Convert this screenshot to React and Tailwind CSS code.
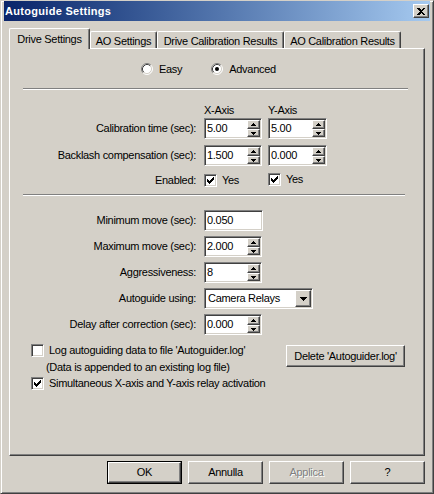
import React from "react";

const raised =
  "border border-t-white border-l-white border-r-[#404040] border-b-[#404040] shadow-[inset_-1px_-1px_0_#808080]";
const sunken =
  "border border-t-[#808080] border-l-[#808080] border-r-white border-b-white shadow-[inset_1px_1px_0_#404040,inset_-1px_-1px_0_#d4d0c8]";

function Check({ checked }) {
  return (
    <div className={`w-[13px] h-[13px] bg-white p-px ${sunken} shrink-0`}>
      {checked && (
        <svg width="9" height="9" viewBox="0 0 9 9" shapeRendering="crispEdges" className="block">
          <rect x="1" y="3" width="1" height="3" fill="#000" />
          <rect x="2" y="4" width="1" height="3" fill="#000" />
          <rect x="3" y="5" width="1" height="3" fill="#000" />
          <rect x="4" y="4" width="1" height="3" fill="#000" />
          <rect x="5" y="3" width="1" height="3" fill="#000" />
          <rect x="6" y="2" width="1" height="3" fill="#000" />
          <rect x="7" y="1" width="1" height="3" fill="#000" />
        </svg>
      )}
    </div>
  );
}

function Radio({ checked }) {
  return (
    <svg width="12" height="12" viewBox="0 0 12 12" className="shrink-0">
      <circle cx="6" cy="6" r="5" fill="#fff" />
      <path d="M2.11 9.89 A5.5 5.5 0 0 1 9.89 2.11" fill="none" stroke="#808080" />
      <path d="M2.82 9.18 A4.5 4.5 0 0 1 9.18 2.82" fill="none" stroke="#404040" />
      <path d="M9.89 2.11 A5.5 5.5 0 0 1 2.11 9.89" fill="none" stroke="#fff" />
      <path d="M9.18 2.82 A4.5 4.5 0 0 1 2.82 9.18" fill="none" stroke="#d4d0c8" />
      {checked && <circle cx="6" cy="6" r="2" fill="#000" />}
    </svg>
  );
}

function Spin({ value, width = "w-[58px]" }) {
  return (
    <div className={`${width} h-[21px] p-px bg-white flex ${sunken}`}>
      <div className="flex-1 pl-px leading-[17px]">{value}</div>
      <div className="w-[13px] flex flex-col">
        <div className={`h-[9px] bg-[#d4d0c8] flex items-center justify-center ${raised}`}>
          <svg width="5" height="3" viewBox="0 0 5 3" shapeRendering="crispEdges">
            <polygon points="2.5,0 5,3 0,3" fill="#000" />
          </svg>
        </div>
        <div className={`h-[8px] bg-[#d4d0c8] flex items-center justify-center ${raised}`}>
          <svg width="5" height="3" viewBox="0 0 5 3" shapeRendering="crispEdges">
            <polygon points="0,0 5,0 2.5,3" fill="#000" />
          </svg>
        </div>
      </div>
    </div>
  );
}

function Row({ label, children, className = "" }) {
  return (
    <div className={`flex items-center h-[21px] ${className}`}>
      <div className="w-[186px] text-right">{label}</div>
      <div className="ml-[8px] flex gap-[6px]">{children}</div>
    </div>
  );
}

function Button({ children, primary, disabled, className = "" }) {
  const inner = (
    <div
      className={`h-full w-full flex items-center justify-center bg-[#d4d0c8] ${raised} ${
        disabled ? "text-[#808080] [text-shadow:1px_1px_0_#fff]" : ""
      }`}
    >
      {children}
    </div>
  );
  if (primary) {
    return <div className={`border border-black ${className}`}>{inner}</div>;
  }
  return <div className={className}>{inner}</div>;
}

export default function App() {
  return (
    <div
      className={`w-[434px] h-[494px] bg-[#d4d0c8] flex flex-col border border-t-[#d4d0c8] border-l-[#d4d0c8] border-r-[#404040] border-b-[#404040] shadow-[inset_1px_1px_0_#fff,inset_-1px_-1px_0_#808080] font-['Liberation_Sans',Arial,sans-serif] text-[11px] leading-[13px] tracking-[-0.3px] text-black`}
    >
      {/* Title bar */}
      <div className="mx-[3px] h-[20px] flex items-center justify-between bg-linear-to-r from-[#0a246a] to-[#a6caf0] pl-[1px] pr-[1px]">
        <span className="text-white font-bold text-[11px] tracking-[0.3px]">Autoguide Settings</span>
        <div className={`w-[16px] h-[14px] bg-[#d4d0c8] flex items-center justify-center ${raised}`}>
          <svg width="8" height="7" viewBox="0 0 8 7" shapeRendering="crispEdges">
            <path d="M0 0h2l2 2 2-2h2L5 3.5 8 7H6L4 5 2 7H0l3-3.5z" fill="#000" />
          </svg>
        </div>
      </div>

      <div className="px-[8px] mt-[7px] flex flex-col">
        {/* Tabs */}
        <div className="flex items-end">
          <div className="relative z-10 -mb-px h-[21px] w-[81px] bg-[#d4d0c8] border-t border-l border-r border-t-white border-l-white border-r-[#404040] rounded-t-[2px] shadow-[inset_-1px_0_0_#808080] flex items-center justify-center">
            Drive Settings
          </div>
          <div className="h-[17px] w-[67px] border-t border-l border-r border-t-white border-l-white border-r-[#404040] rounded-t-[2px] shadow-[inset_-1px_0_0_#808080] flex items-center justify-center pt-[2px]">
            AO Settings
          </div>
          <div className="h-[17px] w-[127px] border-t border-l border-r border-t-white border-l-white border-r-[#404040] rounded-t-[2px] shadow-[inset_-1px_0_0_#808080] flex items-center justify-center pt-[2px]">
            Drive Calibration Results
          </div>
          <div className="h-[17px] w-[117px] border-t border-l border-r border-t-white border-l-white border-r-[#404040] rounded-t-[2px] shadow-[inset_-1px_0_0_#808080] flex items-center justify-center pt-[2px]">
            AO Calibration Results
          </div>
        </div>

        {/* Panel */}
        <div className={`h-[408px] flex flex-col ${raised}`}>
          <div className="mt-[14px] pl-[131px] flex items-center h-[12px]">
            <Radio />
            <span className="ml-[6px]">Easy</span>
            <span className="ml-[29px]">
              <Radio checked />
            </span>
            <span className="ml-[6px]">Advanced</span>
          </div>

          <div className="mt-[13px] ml-[13px] w-[385px] h-[2px] border-t border-t-[#808080] border-b border-b-white" />

          <div className="mt-[14px] flex h-[13px]">
            <div className="w-[186px]" />
            <div className="ml-[8px] w-[58px]">X-Axis</div>
            <div className="ml-[6px] w-[58px]">Y-Axis</div>
          </div>

          <Row label="Calibration time (sec):" className="mt-px">
            <Spin value="5.00" />
            <Spin value="5.00" width="w-[59px]" />
          </Row>
          <Row label="Backlash compensation (sec):" className="mt-[6px]">
            <Spin value="1.500" />
            <Spin value="0.000" width="w-[59px]" />
          </Row>

          <div className="mt-[8px] flex items-center h-[13px]">
            <div className="w-[186px] text-right">Enabled:</div>
            <div className="ml-[8px] w-[58px] flex items-center">
              <Check checked />
              <span className="ml-[5px]">Yes</span>
            </div>
            <div className="ml-[6px] flex items-center -mt-[2px]">
              <Check checked />
              <span className="ml-[5px]">Yes</span>
            </div>
          </div>

          <div className="mt-[7px] ml-[13px] w-[382px] h-[2px] border-t border-t-[#808080] border-b border-b-white" />

          <Row label="Minimum move (sec):" className="mt-[14px]">
            <div className={`w-[59px] h-[21px] p-px bg-white pl-[2px] leading-[17px] ${sunken}`}>0.050</div>
          </Row>
          <Row label="Maximum move (sec):" className="mt-[5px]">
            <Spin value="2.000" />
          </Row>
          <Row label="Aggressiveness:" className="mt-[5px]">
            <Spin value="8" />
          </Row>
          <Row label="Autoguide using:" className="mt-[5px]">
            <div className={`w-[109px] h-[21px] p-px bg-white flex ${sunken}`}>
              <div className="flex-1 pl-[2px] leading-[17px]">Camera Relays</div>
              <div className={`w-[16px] bg-[#d4d0c8] flex items-center justify-center ${raised}`}>
                <svg width="7" height="4" viewBox="0 0 7 4" shapeRendering="crispEdges">
                  <polygon points="0,0 7,0 3.5,4" fill="#000" />
                </svg>
              </div>
            </div>
          </Row>
          <Row label="Delay after correction (sec):" className="mt-[5px]">
            <Spin value="0.000" />
          </Row>

          <div className="mt-[8px] flex items-start">
            <div className="ml-[21px] flex items-start">
              <div className="mt-px">
                <Check />
              </div>
              <div className="ml-[5px] flex flex-col">
                <div className="leading-[14px]">Log autoguiding data to file 'Autoguider.log'</div>
                <div className="leading-[14px] mt-[3px] -ml-[3px]">(Data is appended to an existing log file)</div>
              </div>
            </div>
            <Button className="ml-auto mr-[19px] mt-[2px] w-[119px] h-[22px]">Delete 'Autoguider.log'</Button>
          </div>

          <div className="mt-[3px] ml-[21px] flex items-center h-[13px]">
            <Check checked />
            <span className="ml-[5px]">Simultaneous X-axis and Y-axis relay activation</span>
          </div>
        </div>

        {/* Buttons */}
        <div className="mt-[5px] flex justify-end gap-[6px]">
          <Button primary className="w-[75px] h-[23px]">OK</Button>
          <Button className="w-[75px] h-[23px]">Annulla</Button>
          <Button disabled className="w-[75px] h-[23px]">Applica</Button>
          <Button className="w-[75px] h-[23px]">?</Button>
        </div>
      </div>
    </div>
  );
}
